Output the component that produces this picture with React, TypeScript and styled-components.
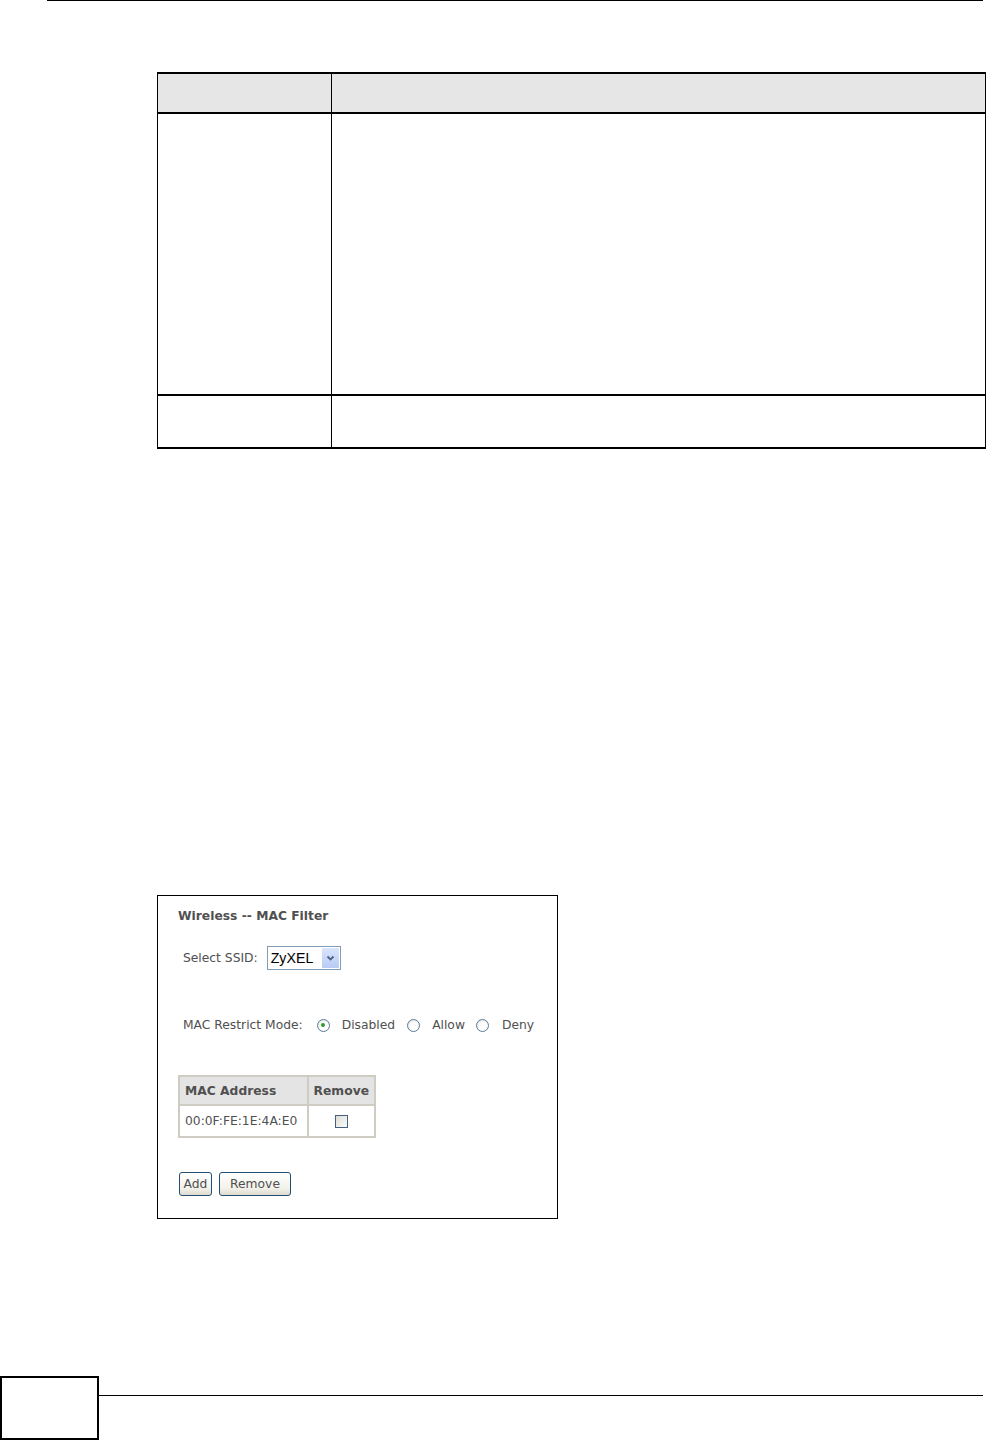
import * as React from "react";
import styled, { createGlobalStyle } from "styled-components";

const GlobalStyle = createGlobalStyle`
  html, body {
    margin: 0;
    padding: 0;
    background: #fff;
  }
  body {
    font-family: "DejaVu Sans", Verdana, sans-serif;
  }
`;

const Page = styled.div`
  width: 987px;
  height: 1440px;
  display: flex;
  flex-direction: column;
  box-sizing: border-box;
  overflow: hidden;
`;

const TopRule = styled.div`
  margin-left: 47px;
  width: 936px;
  height: 0;
  border-top: 1px solid #000;
`;

const FieldTable = styled.div`
  margin: 71px 0 0 157px;
  width: 829px;
  display: grid;
  grid-template-columns: 174px 1fr;
  border: 1px solid #000;
  border-top-width: 2px;
  border-bottom-width: 2px;
  box-sizing: border-box;
`;

const Cell = styled.div<{ $head?: boolean; $h: number; $last?: boolean }>`
  height: ${(p) => p.$h}px;
  background: ${(p) => (p.$head ? "#e6e6e6" : "#fff")};
  border-bottom: ${(p) => (p.$last ? "none" : "2px solid #000")};
  box-sizing: border-box;
  &:nth-child(odd) {
    border-right: 1px solid #000;
  }
`;

const Panel = styled.div`
  margin: 446px 0 0 157px;
  width: 401px;
  height: 324px;
  box-sizing: border-box;
  border: 1.5px solid #000;
  padding: 12px 19px 0 20px;
  color: #505050;
  font-size: 12.3px;
  display: flex;
  flex-direction: column;
`;

const Title = styled.div`
  font-weight: bold;
  line-height: 16px;
  height: 16px;
`;

const Row = styled.div<{ $top: number }>`
  display: flex;
  align-items: center;
  margin-top: ${(p) => p.$top}px;
  padding-left: 5px;
  line-height: 16px;
`;

const Label = styled.span<{ $gap?: number }>`
  margin-left: ${(p) => p.$gap ?? 0}px;
  white-space: nowrap;
`;

const Select = styled.div`
  margin-left: 9px;
  width: 74px;
  height: 24px;
  box-sizing: border-box;
  border: 1px solid #7f9db9;
  display: flex;
  align-items: stretch;
  background: #fff;
`;

const SelectText = styled.span`
  flex: 1;
  font-family: "Liberation Sans", Arial, sans-serif;
  font-size: 14.2px;
  color: #000;
  padding-left: 3px;
  line-height: 22px;
`;

const SelectButton = styled.span`
  width: 17px;
  margin: 1px 1px 1px 0;
  background: linear-gradient(#d9e4fd, #b9cbf5);
  border-radius: 1px;
  display: flex;
  align-items: center;
  justify-content: center;
`;

const Radio = styled.span<{ $checked?: boolean; $gap: number }>`
  margin-left: ${(p) => p.$gap}px;
  width: 13px;
  height: 13px;
  box-sizing: border-box;
  border-radius: 50%;
  border: 1px solid #5a7a98;
  background: radial-gradient(circle at 60% 65%, #fff 40%, #dcdcd6 100%);
  display: flex;
  align-items: center;
  justify-content: center;
  flex-shrink: 0;
  &::after {
    content: "";
    display: ${(p) => (p.$checked ? "block" : "none")};
    width: 4px;
    height: 4px;
    border-radius: 50%;
    background: #2f9b2f;
  }
`;

const MacTable = styled.table`
  margin-top: 42px;
  border-collapse: collapse;
  width: 198px;
  border: 2px solid #cfcdc3;
`;

const Th = styled.th<{ $center?: boolean }>`
  height: 29px;
  padding: 0 5px;
  box-sizing: border-box;
  background: #e4e4e4;
  border: 2px solid #cfcdc3;
  text-align: ${(p) => (p.$center ? "center" : "left")};
  font-weight: bold;
  color: #505050;
  white-space: nowrap;
`;

const Td = styled.td<{ $center?: boolean }>`
  height: 32px;
  padding: 0 5px;
  box-sizing: border-box;
  border: 2px solid #cfcdc3;
  text-align: ${(p) => (p.$center ? "center" : "left")};
  color: #505050;
  white-space: nowrap;
  vertical-align: middle;
`;

const CheckBox = styled.span`
  display: inline-block;
  width: 13px;
  height: 13px;
  box-sizing: border-box;
  border: 1px solid #44607c;
  background: linear-gradient(135deg, #dcdcd7, #fbfbf9);
  vertical-align: middle;
`;

const ButtonRow = styled.div`
  display: flex;
  gap: 7px;
  margin-top: 34px;
  padding-left: 1px;
`;

const Button = styled.button<{ $w: number }>`
  width: ${(p) => p.$w}px;
  height: 24px;
  padding: 0;
  box-sizing: border-box;
  border: 1px solid #244d74;
  border-radius: 3px;
  background: linear-gradient(#ffffff, #f2f1ea 70%, #dedbcf);
  font-family: "DejaVu Sans", Verdana, sans-serif;
  font-size: 12.3px;
  color: #505050;
`;

const Footer = styled.div`
  margin-top: auto;
  display: flex;
  align-items: flex-start;
`;

const PageBox = styled.div`
  width: 99px;
  height: 64px;
  box-sizing: border-box;
  border: 2px solid #000;
`;

const FooterRule = styled.div`
  margin-top: 19px;
  width: 884px;
  border-top: 1.5px solid #000;
`;

const Chevron = () => (
  <svg width="9" height="7" viewBox="0 0 9 7">
    <path d="M1.5 1.5 L4.5 4.5 L7.5 1.5" fill="none" stroke="#4d6185" strokeWidth="1.8" />
  </svg>
);

const App = () => {
  return (
    <Page>
      <GlobalStyle />
      <TopRule />
      <FieldTable>
        <Cell $head $h={40} />
        <Cell $head $h={40} />
        <Cell $h={282} />
        <Cell $h={282} />
        <Cell $h={51} $last />
        <Cell $h={51} $last />
      </FieldTable>

      <Panel>
        <Title>Wireless -- MAC Filter</Title>
        <Row $top={22}>
          <Label>Select SSID:</Label>
          <Select>
            <SelectText>ZyXEL</SelectText>
            <SelectButton>
              <Chevron />
            </SelectButton>
          </Select>
        </Row>
        <Row $top={47}>
          <Label>MAC Restrict Mode:</Label>
          <Radio $checked $gap={14} />
          <Label $gap={12}>Disabled</Label>
          <Radio $gap={12} />
          <Label $gap={12}>Allow</Label>
          <Radio $gap={11} />
          <Label $gap={13}>Deny</Label>
        </Row>
        <MacTable>
          <thead>
            <tr>
              <Th style={{ width: 131 }}>MAC Address</Th>
              <Th $center>Remove</Th>
            </tr>
          </thead>
          <tbody>
            <tr>
              <Td>00:0F:FE:1E:4A:E0</Td>
              <Td $center>
                <CheckBox />
              </Td>
            </tr>
          </tbody>
        </MacTable>
        <ButtonRow>
          <Button $w={33}>Add</Button>
          <Button $w={72}>Remove</Button>
        </ButtonRow>
      </Panel>

      <Footer>
        <PageBox />
        <FooterRule />
      </Footer>
    </Page>
  );
};

export default App;
